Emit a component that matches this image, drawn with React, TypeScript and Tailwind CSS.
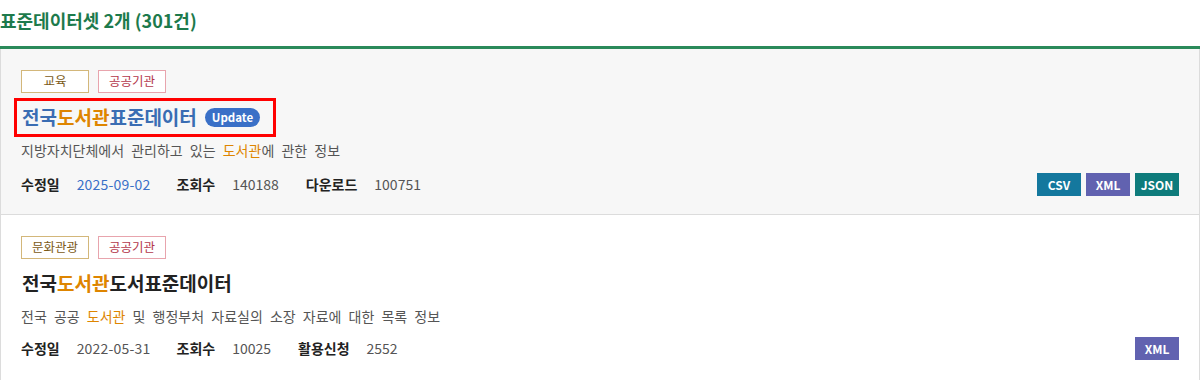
import React from "react";

type Fmt = "CSV" | "XML" | "JSON";

const fmtColor: Record<Fmt, string> = {
  CSV: "bg-[#14789e]",
  XML: "bg-[#6162b0]",
  JSON: "bg-[#0e7b7b]",
};

type Item = {
  tags: string[];
  titleParts: [string, string, string];
  desc: [string, string, string];
  updated: string;
  views: number;
  third: { label: string; value: number };
  formats: Fmt[];
  update?: boolean;
  shaded?: boolean;
};

const items: Item[] = [
  {
    tags: ["교육", "공공기관"],
    titleParts: ["전국", "도서관", "표준데이터"],
    desc: ["지방자치단체에서 관리하고 있는 ", "도서관", "에 관한 정보"],
    updated: "2025-09-02",
    views: 140188,
    third: { label: "다운로드", value: 100751 },
    formats: ["CSV", "XML", "JSON"],
    update: true,
    shaded: true,
  },
  {
    tags: ["문화관광", "공공기관"],
    titleParts: ["전국", "도서관", "도서표준데이터"],
    desc: ["전국 공공 ", "도서관", " 및 행정부처 자료실의 소장 자료에 대한 목록 정보"],
    updated: "2022-05-31",
    views: 10025,
    third: { label: "활용신청", value: 2552 },
    formats: ["XML"],
  },
];

function Tag({ label, idx }: { label: string; idx: number }) {
  const cls =
    idx === 0
      ? "border-[#d3b77a] text-[#7b5a17]"
      : "border-[#e8a4ad] text-[#b4384c]";
  return (
    <span className={`inline-flex h-[23px] w-[68px] items-center justify-center border bg-white text-[12.5px] ${cls}`}>
      {label}
    </span>
  );
}

function Row({ item }: { item: Item }) {
  const titleColor = item.update ? "text-[#3a6db3]" : "text-[#222]";
  return (
    <div className={`border-x border-b border-[#dcdcdc] px-5 pt-[21px] ${item.shaded ? "bg-[#f7f7f7] pb-[18px]" : "bg-white pb-[20px]"}`}>
      <div className="flex gap-[9px]">
        {item.tags.map((t, i) => (
          <Tag key={t} label={t} idx={i} />
        ))}
      </div>
      <div className="mt-[5px] flex">
        <div className={`-ml-[7px] flex h-[39px] items-center gap-2 pl-[5px] pr-[13px] ${item.update ? "border-[3px] border-[#ff0000]" : "border-[3px] border-transparent"}`}>
          <h3 className={`text-[19px] font-bold ${titleColor}`}>
            {item.titleParts[0]}
            <span className="text-[#de8500]">{item.titleParts[1]}</span>
            {item.titleParts[2]}
          </h3>
          {item.update && (
            <span className="inline-flex h-[19px] items-center rounded-full bg-[#3a70c7] px-[7px] text-[11.5px] font-bold text-white">
              Update
            </span>
          )}
        </div>
      </div>
      <p className="mt-[2px] text-[14px] leading-[22px] text-[#555] [word-spacing:4px]">
        {item.desc[0]}
        <span className="text-[#de8500]">{item.desc[1]}</span>
        {item.desc[2]}
      </p>
      <div className={`flex items-center justify-between ${item.shaded ? "mt-[12px]" : "mt-[10px]"}`}>
        <div className="flex items-center text-[14px]">
          <span className="font-bold text-[#222]">수정일</span>
          <span className={`ml-[17px] tracking-[0.2px] ${item.update ? "text-[#3a70c7]" : "text-[#555]"}`}>{item.updated}</span>
          <span className="ml-[26px] font-bold text-[#222]">조회수</span>
          <span className="ml-[17px] text-[#555]">{item.views}</span>
          <span className="ml-[27px] font-bold text-[#222]">{item.third.label}</span>
          <span className="ml-[17px] text-[#555]">{item.third.value}</span>
        </div>
        <div className="flex gap-[5px]">
          {item.formats.map((f) => (
            <span
              key={f}
              className={`inline-flex h-[23px] w-[44px] items-center justify-center text-[12px] font-bold text-white ${fmtColor[f]}`}
            >
              {f}
            </span>
          ))}
        </div>
      </div>
    </div>
  );
}

export default function App() {
  return (
    <div className="h-[380px] w-[1200px] bg-white font-['Noto_Sans_CJK_KR','Noto_Sans',sans-serif]">
      <h2 className="pt-[7px] text-[18px] font-bold leading-[26px] text-[#1d7a4c]">표준데이터셋 2개 (301건)</h2>
      <div className="mt-[13px] border-t-[3px] border-[#2a8a5a]">
        {items.map((it) => (
          <Row key={it.titleParts.join("")} item={it} />
        ))}
      </div>
    </div>
  );
}
